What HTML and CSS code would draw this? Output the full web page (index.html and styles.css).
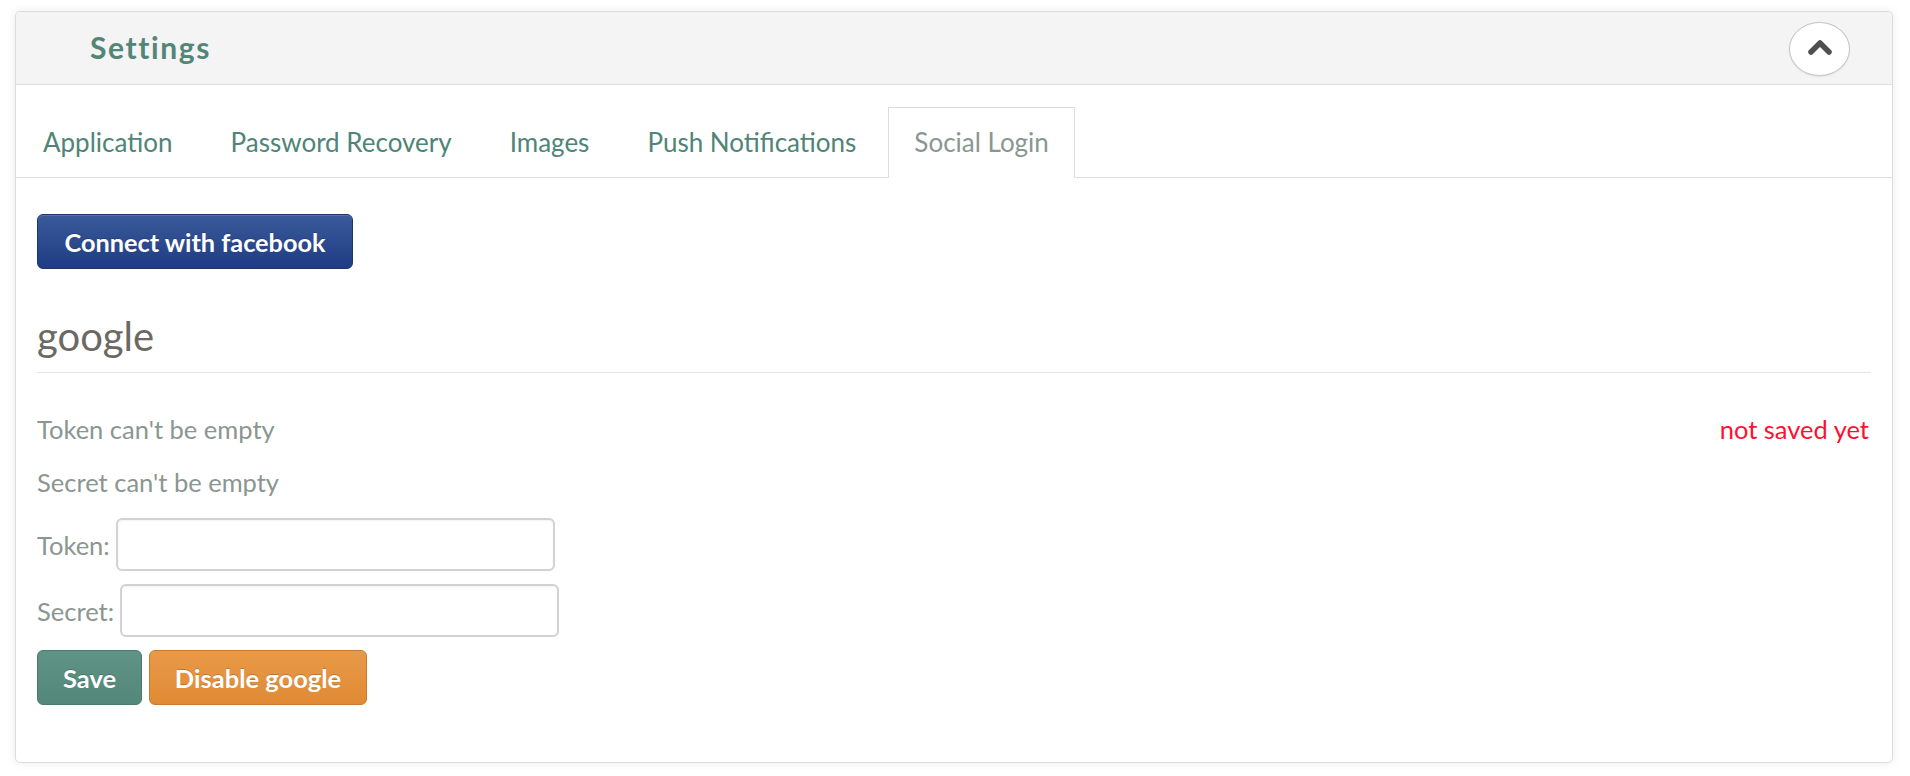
FILE: index.html
```html
<!DOCTYPE html>
<html>
<head>
<meta charset="utf-8">
<link rel="stylesheet" href="styles.css">
</head>
<body>
<div class="panel">
  <div class="panel-header">
    <h2 class="panel-title">Settings</h2>
    <button class="toggle" aria-label="collapse">
      <svg width="24" height="16" viewBox="0 0 24 16"><polyline points="3,13 12,4 21,13" fill="none" stroke="#505050" stroke-width="5.5" stroke-linecap="round" stroke-linejoin="round"/></svg>
    </button>
  </div>
  <ul class="tabs">
    <li class="tab">Application</li>
    <li class="tab">Password Recovery</li>
    <li class="tab">Images</li>
    <li class="tab">Push Notifications</li>
    <li class="tab active">Social Login</li>
  </ul>
  <div class="content">
    <button class="btn btn-fb">Connect with facebook</button>
    <h3 class="section-title">google</h3>
    <div class="msg-row">
      <span class="msg">Token can't be empty</span>
      <span class="status">not saved yet</span>
    </div>
    <div class="msg msg-2">Secret can't be empty</div>
    <div class="field"><label class="field-label">Token:</label><input class="field-input" type="text"></div>
    <div class="field field-2"><label class="field-label">Secret:</label><input class="field-input" type="text"></div>
    <div class="actions">
      <button class="btn btn-save">Save</button>
      <button class="btn btn-disable">Disable google</button>
    </div>
  </div>
</div>
</body>
</html>
```
FILE: styles.css
```css
* { box-sizing: border-box; }
body {
  margin: 0;
  background: #ffffff;
  font-family: Lato, "Open Sans", sans-serif;
}
.panel {
  margin: 11px 17px 14px 15px;
  border: 1px solid #dcdcdc;
  border-radius: 5px;
  background: #fff;
  box-shadow: 0 0 10px rgba(0,0,0,0.08);
  height: 752px;
}
.panel-header {
  height: 73px;
  background: #f4f4f4;
  border-bottom: 1px solid #dedede;
  border-radius: 5px 5px 0 0;
  display: flex;
  align-items: center;
  justify-content: space-between;
  padding: 0 42px 0 74px;
}
.panel-title {
  margin: 0 0 3px 0;
  font-size: 30px;
  font-weight: 700;
  letter-spacing: 1.6px;
  color: #538578;
}
.toggle {
  width: 61px;
  height: 54px;
  border-radius: 50%;
  border: 1px solid #c4c4c4;
  background: #fff;
  display: flex;
  align-items: center;
  justify-content: center;
  padding: 0 0 4px 0;
  margin-top: 2px;
  box-shadow: 0 1px 2px rgba(0,0,0,0.08);
}
.tabs {
  list-style: none;
  margin: 0;
  padding: 22px 0 0 1px;
  display: flex;
  border-bottom: 1px solid #dedede;
}
.tab {
  font-size: 26px;
  color: #4f8477;
  padding: 0 25px;
  height: 70px;
  line-height: 68px;
  margin-right: 6px;
  margin-bottom: -1px;
  border: 1px solid transparent;
  border-bottom: none;
}
.tab.active {
  color: #8a9690;
  border-color: #dcdcdc;
  background: #fff;
  height: 71px;
}
.content {
  padding: 36px 23px 0 21px;
}
.btn {
  font-family: Lato, "Open Sans", sans-serif;
  font-size: 25.5px;
  font-weight: 700;
  color: #fff;
  border-radius: 6px;
  height: 55px;
  padding: 0;
  text-shadow: 0 -1px 0 rgba(0,0,0,0.2);
  cursor: pointer;
}
.btn-fb {
  display: block;
  width: 316px;
  font-size: 25.3px;
  background: linear-gradient(#3a5a9a, #1f3c84);
  border: 1px solid #1c346f;
  box-shadow: inset 0 1px 0 rgba(255,255,255,0.15);
}
.section-title {
  margin: 44px -2px 0 0;
  font-size: 40px;
  font-weight: 400;
  color: #6a6964;
  line-height: 46px;
  padding-bottom: 13px;
  border-bottom: 1px solid #e3e3e3;
}
.msg-row {
  display: flex;
  justify-content: space-between;
  align-items: center;
  margin-top: 39px;
  height: 34px;
}
.msg {
  font-size: 25.5px;
  color: #8a9690;
  line-height: 34px;
}
.msg-2 { margin-top: 19px; }
.status {
  font-size: 25.5px;
  color: #ff1030;
}
.field {
  display: flex;
  align-items: center;
  margin-top: 19px;
}
.field-2 { margin-top: 13px; }
.field-label {
  font-size: 25.5px;
  color: #8a9690;
  margin-right: 6px;
}
.field-input {
  width: 439px;
  height: 53px;
  border: 2px solid #d2d2d2;
  border-radius: 6px;
  background: #fff;
  box-shadow: inset 0 1px 2px rgba(0,0,0,0.05);
}
.actions {
  display: flex;
  gap: 7px;
  margin-top: 13px;
}
.btn-save {
  width: 105px;
  background: linear-gradient(#5f9385, #53877a);
  border: 1px solid #4a7a6e;
}
.btn-disable {
  width: 218px;
  background: linear-gradient(#e89a48, #e08a35);
  border: 1px solid #c87a2e;
}
```
